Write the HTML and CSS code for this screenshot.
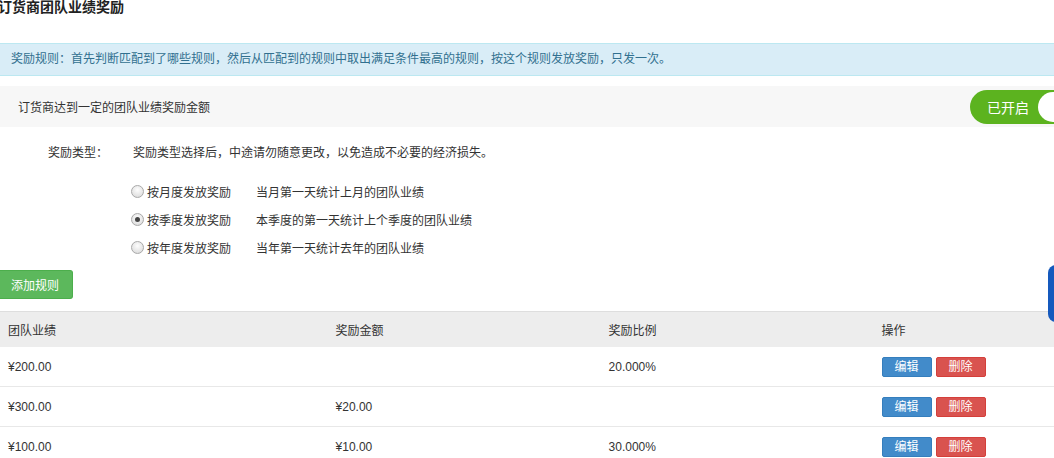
FILE: index.html
```html
<!DOCTYPE html>
<html lang="zh-CN">
<head>
<meta charset="utf-8">
<title>订货商团队业绩奖励</title>
<link rel="stylesheet" href="styles.css">
</head>
<body>
<div class="page">
  <h3 class="title">订货商团队业绩奖励</h3>
  <div class="alert">奖励规则：首先判断匹配到了哪些规则，然后从匹配到的规则中取出满足条件最高的规则，按这个规则发放奖励，只发一次。</div>
  <div class="panel-head">
    <span class="panel-title">订货商达到一定的团队业绩奖励金额</span>
    <div class="switch"><span class="switch-text">已开启</span><span class="knob"></span></div>
  </div>
  <div class="form-row">
    <span class="form-label">奖励类型：</span>
    <span class="form-help">奖励类型选择后，中途请勿随意更改，以免造成不必要的经济损失。</span>
  </div>
  <div class="radios">
    <label class="radio-row"><input type="radio" name="type" class="radio"><span class="radio-name">按月度发放奖励</span><span class="radio-desc">当月第一天统计上月的团队业绩</span></label>
    <label class="radio-row"><input type="radio" name="type" class="radio" checked><span class="radio-name">按季度发放奖励</span><span class="radio-desc">本季度的第一天统计上个季度的团队业绩</span></label>
    <label class="radio-row"><input type="radio" name="type" class="radio"><span class="radio-name">按年度发放奖励</span><span class="radio-desc">当年第一天统计去年的团队业绩</span></label>
  </div>
  <button class="btn-add" type="button">添加规则</button>
  <table class="rules">
    <colgroup><col class="c1"><col class="c2"><col class="c3"><col class="c4"></colgroup>
    <thead>
      <tr><th>团队业绩</th><th>奖励金额</th><th>奖励比例</th><th>操作</th></tr>
    </thead>
    <tbody>
      <tr><td>¥200.00</td><td></td><td>20.000%</td><td><span class="ops"><button class="btn-edit" type="button">编辑</button><button class="btn-del" type="button">删除</button></span></td></tr>
      <tr><td>¥300.00</td><td>¥20.00</td><td></td><td><span class="ops"><button class="btn-edit" type="button">编辑</button><button class="btn-del" type="button">删除</button></span></td></tr>
      <tr><td>¥100.00</td><td>¥10.00</td><td>30.000%</td><td><span class="ops"><button class="btn-edit" type="button">编辑</button><button class="btn-del" type="button">删除</button></span></td></tr>
    </tbody>
  </table>
</div>
<div class="side-tab"></div>
</body>
</html>
```

FILE: styles.css
```css
html, body {
  margin: 0;
  padding: 0;
  overflow: hidden;
  background: #fff;
}
body {
  font-family: "Liberation Sans", "Noto Sans CJK SC", sans-serif;
  font-size: 12px;
  color: #333;
}
.page {
  width: 1092px;
  margin-left: -2px;
}
.title {
  margin: 0;
  font-size: 14px;
  line-height: 14px;
  font-weight: bold;
  color: #222;
}
.alert {
  margin-top: 29px;
  height: 31px;
  line-height: 31px;
  padding: 0 12px;
  background: #d9edf7;
  border: 1px solid #bce8f1;
  color: #31708f;
}
.panel-head {
  margin-top: 10px;
  height: 41px;
  background: #f7f7f7;
  display: flex;
  align-items: center;
  justify-content: space-between;
  padding: 0 20px;
}
.panel-title {
  color: #333;
}
.switch {
  width: 100px;
  height: 34px;
  box-sizing: border-box;
  border-radius: 17px;
  background: #5cb31f;
  display: flex;
  align-items: center;
  justify-content: space-between;
  padding: 0 2px 0 17px;
}
.switch-text {
  color: #fff;
  font-size: 14px;
}
.knob {
  width: 30px;
  height: 30px;
  border-radius: 50%;
  background: #fff;
}
.form-row {
  margin-top: 16px;
  display: flex;
  line-height: 20px;
}
.form-label {
  flex: 0 0 135px;
  box-sizing: border-box;
  padding-left: 50px;
}
.radios {
  margin-top: 14px;
  padding-left: 133px;
  display: flex;
  flex-direction: column;
}
.radio-row {
  height: 28px;
  display: flex;
  align-items: center;
}
.radio {
  -webkit-appearance: none;
  appearance: none;
  width: 13px;
  height: 13px;
  margin: 0 3px 0 0;
  border-radius: 50%;
  border: 1px solid #a9a9a9;
  box-sizing: border-box;
  background: radial-gradient(circle at 50% 35%, #fdfdfd 0%, #e2e2e2 70%, #d0d0d0 100%);
  display: inline-flex;
  align-items: center;
  justify-content: center;
}
.radio:checked::after {
  content: "";
  width: 5px;
  height: 5px;
  border-radius: 50%;
  background: #444;
}
.radio-name {
  width: 109px;
}
.btn-add {
  margin-top: 9px;
  display: block;
  height: 29px;
  padding: 0 13px;
  border: 1px solid #4cae4c;
  border-left: 0;
  border-radius: 0 3px 3px 0;
  background: #5cb85c;
  color: #fff;
  font-family: inherit;
  font-size: 12px;
}
.rules {
  margin-top: 12px;
  width: 1092px;
  table-layout: fixed;
  border-collapse: collapse;
}
.c1 { width: 30%; }
.c2 { width: 25%; }
.c3 { width: 25%; }
.c4 { width: 20%; }
.rules th {
  height: 35px;
  padding: 0 10px;
  text-align: left;
  font-weight: normal;
  color: #333;
  background: #ededed;
  border-top: 1px solid #dedede;
}
.rules td {
  height: 39px;
  padding: 0 10px;
  border-bottom: 1px solid #e8e8e8;
  color: #333;
}
.ops {
  display: flex;
  gap: 4px;
}
.btn-edit, .btn-del {
  width: 50px;
  height: 20px;
  padding: 0;
  border-radius: 2px;
  font-family: inherit;
  font-size: 12px;
  color: #fff;
  line-height: 18px;
}
.btn-edit {
  background: #428bca;
  border: 1px solid #357ebd;
}
.btn-del {
  background: #d9534f;
  border: 1px solid #d43f3a;
}
.side-tab {
  position: fixed;
  top: 265px;
  right: -20px;
  width: 26px;
  height: 57px;
  border-radius: 8px 0 0 8px;
  background: #1559bd;
}
```
